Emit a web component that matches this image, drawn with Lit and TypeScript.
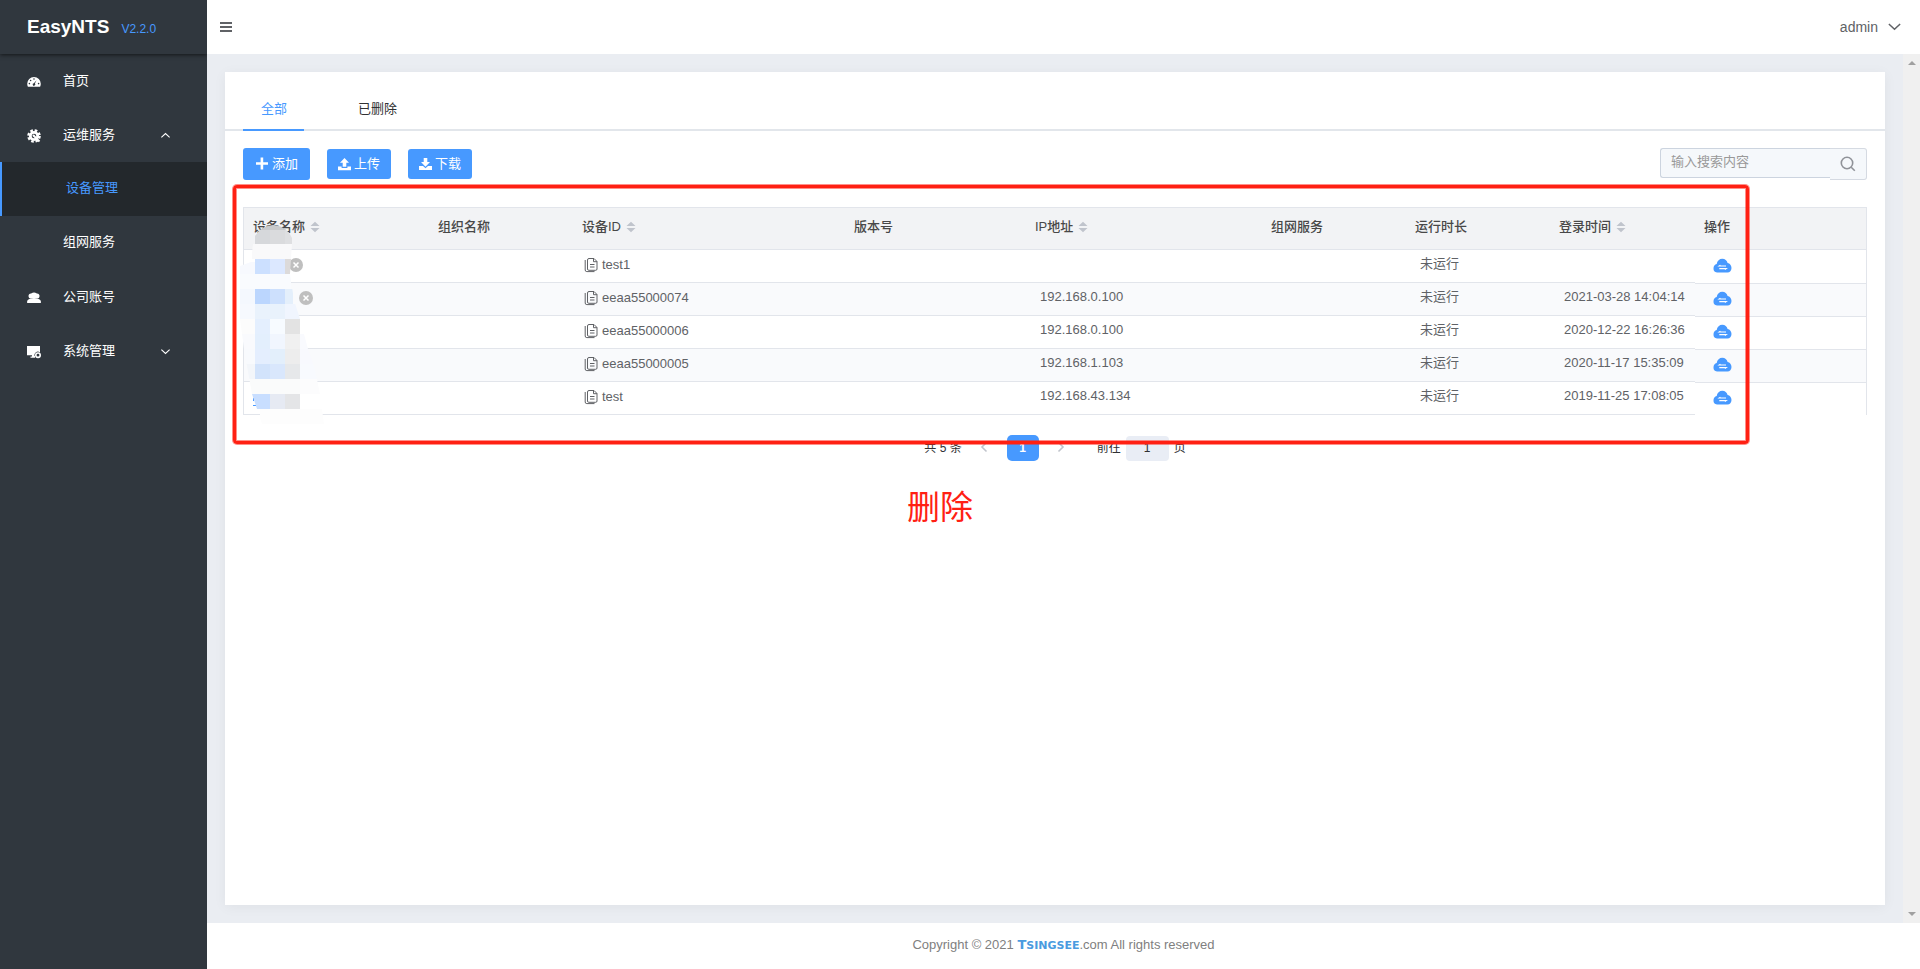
import { LitElement, html, css, svg, nothing } from "lit";
import { customElement, state } from "lit/decorators.js";

interface Device {
  id: string;
  ip: string;
  time: string;
  offlineMark: "near" | "far" | "";
}

const DEVICES: Device[] = [
  { id: "test1", ip: "", time: "", offlineMark: "near" },
  { id: "eeaa55000074", ip: "192.168.0.100", time: "2021-03-28 14:04:14", offlineMark: "far" },
  { id: "eeaa55000006", ip: "192.168.0.100", time: "2020-12-22 16:26:36", offlineMark: "" },
  { id: "eeaa55000005", ip: "192.168.1.103", time: "2020-11-17 15:35:09", offlineMark: "" },
  { id: "test", ip: "192.168.43.134", time: "2019-11-25 17:08:05", offlineMark: "" },
];

const COLUMNS = [
  { label: "设备名称", sort: true, width: 185 },
  { label: "组织名称", sort: false, width: 144 },
  { label: "设备ID", sort: true, width: 272 },
  { label: "版本号", sort: false, width: 181 },
  { label: "IP地址", sort: true, width: 236 },
  { label: "组网服务", sort: false, width: 144 },
  { label: "运行时长", sort: false, width: 144 },
  { label: "登录时间", sort: true, width: 145 },
  { label: "操作", sort: false, width: 171 },
];

// Redaction mosaic: x, y, width, height, fill
const MOSAIC: [number, number, number, number, string][] = [
  [15, 19, 15, 15, "#d6d8db"], [30, 19, 15, 15, "#dadbdd"], [45, 19, 15, 15, "#dedfe1"],
  [12, 34, 40, 15, "#f9f9fa"],
  [0, 52, 15, 12, "#f7f9fe"], [15, 49, 15, 15, "#cce0ff"], [30, 49, 15, 15, "#dce8ff"], [45, 49, 6, 15, "#dcdada"],
  [0, 64, 51, 15, "#f9fbfe"],
  [0, 79, 15, 15, "#f4f8fe"], [15, 79, 15, 15, "#bbd6fe"], [30, 79, 15, 15, "#cde0fd"], [45, 79, 8, 15, "#e4effb"],
  [0, 94, 15, 15, "#f6f9fe"], [15, 94, 30, 15, "#e9f2fc"], [45, 94, 15, 15, "#f0f5fe"],
  [0, 109, 15, 15, "#fcfcfc"], [15, 109, 15, 15, "#e4effe"], [30, 109, 15, 15, "#f7fbff"], [45, 109, 15, 15, "#e3e3e3"],
  [0, 124, 15, 15, "#f9fafd"], [15, 124, 15, 15, "#e3effd"], [30, 124, 15, 15, "#f1f6fe"], [45, 124, 15, 15, "#f0f0f0"], [60, 124, 8, 15, "#f9fafe"],
  [0, 139, 15, 15, "#f8fafd"], [15, 139, 15, 15, "#e4eefe"], [30, 139, 15, 15, "#e3effb"], [45, 139, 15, 15, "#ededed"], [60, 139, 15, 15, "#f8f9fe"],
  [0, 154, 15, 15, "#f3f6fa"], [15, 154, 15, 15, "#d2e3fb"], [30, 154, 15, 15, "#d9e7fc"], [45, 154, 15, 15, "#e6e8ea"], [60, 154, 20, 15, "#f8fafe"],
  [0, 169, 60, 15, "#fafbfb"], [60, 169, 20, 15, "#fcfcfd"],
  [10, 184, 20, 15, "#c8deff"], [30, 184, 15, 15, "#e6eaf3"], [45, 184, 15, 15, "#e4e5e7"],
  [20, 199, 64, 15, "#fdfdfd"],
];

const chevron = (dir: "up" | "down", size: number) => html`
  <svg width=${size} height=${size} viewBox="0 0 12 12" fill="none" stroke="currentColor" stroke-width="1.2">
    <path d=${dir === "up" ? "M1.5 8 6 3.8 10.5 8" : "M1.5 4 6 8.2 10.5 4"} />
  </svg>
`;

const ICONS = {
  gauge: svg`<path fill="currentColor" fill-rule="evenodd" d="M7 2a6.8 6.8 0 0 0-6.8 6.8c0 1.1.2 2 .7 2.9h12.2c.5-.9.7-1.8.7-2.9A6.8 6.8 0 0 0 7 2zM7 3.200a.8.8 0 1 1 0 1.600.8.8 0 0 1 0-1.600zM3.600 4.700a.8.8 0 1 1 0 1.600.8.8 0 0 1 0-1.600zM2.400 7.800a.8.8 0 1 1 0 1.600.8.8 0 0 1 0-1.600zM11.600 7.800a.8.8 0 1 1 0 1.600.8.8 0 0 1 0-1.600zM9.500 5.200 7.900 8.600a1.300 1.300 0 1 1-1-.4z"/>`,
  gear: svg`<g fill="none" stroke="currentColor"><circle cx="7" cy="7" r="5.600" stroke-width="2.400" stroke-dasharray="2.600 1.800"/><circle cx="7" cy="7" r="3.700" stroke-width="2.800"/><path d="m6.500 6.500 6 6" stroke-width="2"/></g><circle cx="6.500" cy="6.500" r="1" fill="currentColor"/>`,
  users: svg`<g fill="currentColor"><circle cx="4" cy="5" r="2.500"/><circle cx="10" cy="5" r="2.500"/><circle cx="7" cy="4.800" r="3.200"/><path d="M0 11.200c0-2.200 1.500-3.300 4-3.700h6c2.500.4 4 1.500 4 3.700 0 .6-.4.800-1 .8H1c-.6 0-1-.2-1-.8z"/></g>`,
  monitor: svg`<path fill="currentColor" d="M0 1h13v6.500A3.400 3.400 0 0 0 7.500 11H8v1.800H3.500V11.500H5V10.200H0z"/><circle cx="11" cy="10.200" r="2.200" fill="none" stroke="currentColor" stroke-width="1.600"/>`,
};

const icon = (name: keyof typeof ICONS) =>
  html`<svg class="menu-icon" width="14" height="14" viewBox="0 0 14 14">${ICONS[name]}</svg>`;

@customElement("app-sidebar")
export class AppSidebar extends LitElement {
  static styles = css`
    :host { display: flex; flex-direction: column; width: 207px; flex: none; background: #30373e; color: #fff; overflow: hidden; }
    .brand {
      height: 54px; flex: none; box-sizing: border-box; padding: 0 27px; display: flex; align-items: baseline; gap: 12px;
      line-height: 54px; box-shadow: 0 1px 4px rgba(0, 0, 0, 0.6);
    }
    .name { font-size: 19px; font-weight: 700; }
    .version { font-size: 12px; color: #4799ff; }
    ul { list-style: none; margin: 0; padding: 0; }
    a {
      display: flex; align-items: center; height: 54px; box-sizing: border-box; padding: 0 36px 0 27px;
      color: inherit; text-decoration: none; font-size: 13px;
    }
    .menu-icon { margin-right: 22px; flex: none; padding-top: 2px; }
    .text { flex: 1; padding-bottom: 4px; }
    .sub { padding-left: 63px; padding-bottom: 5px; }
    .active { background: #23282c; border-left: 2px solid #4799ff; color: #4799ff; padding-left: 64px; }
  `;

  render() {
    return html`
      <div class="brand"><span class="name">EasyNTS</span><span class="version">V2.2.0</span></div>
      <nav>
        <ul>
          <li><a href="#home">${icon("gauge")}<span class="text">首页</span></a></li>
          <li>
            <a href="#ops">${icon("gear")}<span class="text">运维服务</span>${chevron("up", 11)}</a>
            <ul>
              <li><a class="sub active" href="#devices" aria-current="page">设备管理</a></li>
              <li><a class="sub" href="#network">组网服务</a></li>
            </ul>
          </li>
          <li><a href="#accounts">${icon("users")}<span class="text">公司账号</span></a></li>
          <li><a href="#system">${icon("monitor")}<span class="text">系统管理</span>${chevron("down", 11)}</a></li>
        </ul>
      </nav>
    `;
  }
}

@customElement("device-table")
export class DeviceTable extends LitElement {
  static styles = css`
    :host { display: block; position: relative; }
    table {
      width: 100%; table-layout: fixed; border-collapse: separate; border-spacing: 0; font-size: 13px; color: #606266;
      border: 1px solid #e2e5eb; border-bottom: 0;
    }
    th, td { padding: 0 9px; text-align: left; box-sizing: border-box; border-bottom: 1px solid #e2e5eb; white-space: nowrap; }
    th { height: 42px; padding-bottom: 6px; background: #f2f3f5; color: #484848; font-weight: 500; }
    td { height: 33px; line-height: 20px; }
    tr:nth-child(even) td { background: #f9fafc; }
    .indent { padding-left: 14px; padding-bottom: 4px; }
    .op, tr:nth-child(even) .op { padding-left: 18px; padding-bottom: 3px; border-bottom: 0; }
    tr + tr .op { border-top: 1px solid #e2e5eb; }
    .sort { margin-left: 5px; vertical-align: -2px; }
    .id { display: flex; align-items: center; gap: 4px; padding-left: 2px; padding-bottom: 2px; }
    .mark { display: block; margin-left: 36px; margin-bottom: 2px; }
    .far { margin-left: 46px; }
    .action { border: 0; background: none; padding: 0; display: block; color: #4799ff; }
    .action svg { display: block; }
    .mosaic { position: absolute; left: -3px; top: 3px; pointer-events: none; }
  `;

  render() {
    return html`
      <table>
        <colgroup>
          ${COLUMNS.map((c) => html`<col style="width:${(c.width / 1622) * 100}%" />`)}
        </colgroup>
        <thead>
          <tr>
            ${COLUMNS.map(
              (c) => html`<th scope="col">${c.label}${c.sort
                ? html`<svg class="sort" width="10" height="12" viewBox="0 0 10 12" fill="#c0c4cc"><path d="M.5 5 5 .8 9.500 5zM.5 7h9L5 11.200z" /></svg>`
                : nothing}</th>`
            )}
          </tr>
        </thead>
        <tbody>
          ${DEVICES.map(
            (d) => html`
              <tr>
                <td>
                  ${d.offlineMark
                    ? html`<svg class="mark ${d.offlineMark}" width="14" height="14" viewBox="0 0 14 14">
                        <circle cx="7" cy="7" r="7" fill="#bfbfbf" />
                        <path d="m4.500 4.500 5 5m0-5-5 5" stroke="#fff" stroke-width="1.500" />
                      </svg>`
                    : nothing}
                </td>
                <td></td>
                <td>
                  <div class="id">
                    <svg width="14" height="16" viewBox="0 0 14 16" fill="none" stroke="#606266">
                      <path d="M5 1.500h5l3 3v7.500a1.300 1.300 0 0 1-1.300 1.300H4.800A1.300 1.300 0 0 1 3.500 12V3A1.500 1.500 0 0 1 5 1.500z" />
                      <path d="M9.500 1.500v3.200H13M6 7.500h4.500M6 10h4.500M1.200 3v10a1.600 1.600 0 0 0 1.600 1.600h7.700" />
                    </svg>
                    <span>${d.id}</span>
                  </div>
                </td>
                <td></td>
                <td class="indent">${d.ip}</td>
                <td></td>
                <td class="indent">未运行</td>
                <td class="indent">${d.time}</td>
                <td class="op">
                  <button class="action" aria-label="连接">
                    <svg width="19" height="15" viewBox="0 0 19 15">
                      <path fill="currentColor" d="M4 14.500A4 4 0 0 1 .5 10.300c0-2.200 1.300-3.800 3.200-4.300C4.200 2.700 6.500.7 9.300.7c2.700 0 4.700 1.600 5.300 4.300 2.300.4 3.900 2.400 3.900 4.900 0 2.600-1.700 4.600-4 4.600z" />
                      <path d="M13 8H6.300l1.200-.8M6.300 10.700H13l-1.200.8" fill="none" stroke="#fff" stroke-width="1.200" />
                    </svg>
                  </button>
                </td>
              </tr>
            `
          )}
        </tbody>
      </table>
      <svg class="mosaic" width="86" height="216" viewBox="0 0 86 216" aria-hidden="true" shape-rendering="crispEdges">
        <defs>
          <clipPath id="stroke">
            <path d="M15 26Q22 15 34 15 48 17 52 28V34L50 64 54 90 60 109 68 139 75 160 80 184 84 214H22L12 184 4 139 0 109V56L11 52 13 34z" />
          </clipPath>
        </defs>
        <path d="M13 188v3M13 195.500h7" stroke="#4799ff" />
        <g clip-path="url(#stroke)">
          ${MOSAIC.map(([x, y, w, h, fill]) => svg`<rect x=${x} y=${y} width=${w} height=${h} fill=${fill} />`)}
          <rect x="14" y="15" width="38" height="5" fill="#c8cacc" />
        </g>
      </svg>
    `;
  }
}

@customElement("app-root")
export class AppRoot extends LitElement {
  @state() private tab = "all";

  static styles = css`
    :host {
      display: flex; min-height: 100vh; font-family: "Liberation Sans", "Noto Sans CJK SC", sans-serif; font-size: 13px; color: #303133;
    }
    button, input { font: inherit; }
    .page { flex: 1; min-width: 0; display: flex; flex-direction: column; }
    header { height: 54px; flex: none; box-sizing: border-box; padding: 0 18px 1px 13px; display: flex; align-items: center; justify-content: space-between; background: #fff; }
    .plain { border: 0; background: none; padding: 0; display: flex; align-items: center; color: #606266; }
    .user { gap: 9px; font-size: 14px; }
    .body { flex: 1; display: flex; background: #eaedf2; }
    main { flex: 1; min-width: 0; padding: 18px; display: flex; }
    .rail { width: 17px; flex: none; background: #f0f0f0; display: flex; flex-direction: column; justify-content: space-between; align-items: center; padding: 6px 0; box-sizing: border-box; }
    .card { flex: 1; min-width: 0; background: #fff; box-shadow: 0 2px 12px rgba(0, 0, 0, 0.05); position: relative; }
    .tabs { display: flex; gap: 36px; padding: 18px 18px 0; border-bottom: 2px solid #e2e6eb; }
    .tab { border: 0; background: none; height: 41px; padding: 0 17px 4px 18px; margin-bottom: -2px; border-bottom: 2px solid transparent; color: #303133; }
    .selected { color: #4799ff; border-bottom-color: #4799ff; }
    .content { padding: 17px 18px; }
    .toolbar { display: flex; align-items: center; gap: 17px; }
    .btn { height: 30px; border: 0; border-radius: 3px; background: #4799ff; color: #fff; padding: 0 11px; display: flex; align-items: center; gap: 3px; }
    .btn span { padding-bottom: 3px; }
    .add { height: 32px; padding: 0 12px; }
    .search { margin-left: auto; width: 207px; height: 32px; display: flex; align-items: flex-start; }
    .search input {
      flex: 1; min-width: 0; height: 30px; box-sizing: border-box; padding: 0 10px 4px; border: 1px solid #ccd4df; border-right: 0;
      border-radius: 3px 0 0 3px; background: #f5f8fb; color: #606266; outline: none;
    }
    .search input::placeholder { color: #999; opacity: 1; }
    .search button {
      width: 37px; height: 32px; box-sizing: border-box; border: 1px solid #d5dae2; border-left: 0; border-radius: 0 3px 3px 0;
      background: #f5f8fb; padding: 0 1px 0 0; display: grid; place-items: center;
    }
    device-table { margin-top: 27px; }
    .pager { display: flex; justify-content: center; align-items: center; margin-top: 20px; height: 26px; font-size: 12px; }
    .pager span { padding-bottom: 3px; }
    .step { border: 0; background: none; padding: 0 0 2px; width: 45px; height: 26px; display: grid; place-items: center; color: #c0c4cc; }
    .page-no { width: 32px; height: 26px; border: 0; border-radius: 5px; background: #4799ff; color: #fff; font-weight: 700; padding: 0 0 1px; }
    .jump { display: flex; align-items: center; gap: 5px; margin-left: 13px; }
    .jump input { width: 43px; height: 25px; box-sizing: border-box; border: 0; border-radius: 4px; background: #e9edf5; text-align: center; padding: 0 0 1px; color: #303133; }
    .frame {
      position: absolute; left: 8px; right: 136px; top: 113px; height: 253px; border: 3px solid #ff2013; border-radius: 4px;
      box-shadow: 0 0 0 1px rgba(255, 32, 19, 0.5), inset 0 0 0 1px rgba(255, 32, 19, 0.5); pointer-events: none;
    }
    .note { position: absolute; left: 682px; top: 412px; font-size: 33px; line-height: 48px; color: #ff2013; }
    footer { height: 46px; flex: none; display: flex; align-items: center; justify-content: center; background: #fff; color: #808080; padding-bottom: 4px; box-sizing: border-box; }
    .logo { color: #4a9be0; font-family: "DejaVu Sans", sans-serif; font-weight: 700; font-size: 13px; line-height: 1; }
    .logo small { font-size: 11px; }
  `;

  render() {
    const tabs = [["all", "全部"], ["deleted", "已删除"]];
    return html`
      <app-sidebar></app-sidebar>
      <div class="page">
        <header>
          <button class="plain" aria-label="折叠菜单">
            <svg width="12" height="10" viewBox="0 0 12 10" fill="#606266"><path d="M0 0h12v2H0zM0 4h12v2H0zM0 8h12v2H0z" /></svg>
          </button>
          <button class="plain user">admin ${chevron("down", 15)}</button>
        </header>
        <div class="body">
          <main>
            <section class="card">
              <div class="tabs" role="tablist">
                ${tabs.map(
                  ([key, label]) => html`<button
                    role="tab"
                    aria-selected=${this.tab === key}
                    class="tab ${this.tab === key ? "selected" : ""}"
                    @click=${() => (this.tab = key)}
                  >${label}</button>`
                )}
              </div>
              <div class="content">
                <div class="toolbar">
                  <button class="btn add">
                    <svg width="14" height="14" viewBox="0 0 14 14" fill="#fff"><path d="M5.600 .5h2.600v4.700H13v2.600H8.200v4.700H5.600V7.800H1V5.200h4.600z" /></svg><span>添加</span>
                  </button>
                  <button class="btn">
                    <svg width="13" height="13" viewBox="0 0 13 13" fill="#fff"><path d="M6.500 0 11 4.700H8.300v4H4.700v-4H2zM0 8.500h3.600v1.400h5.800V8.500H13v3.800H0z" /></svg><span>上传</span>
                  </button>
                  <button class="btn">
                    <svg width="13" height="13" viewBox="0 0 13 13" fill="#fff"><path d="M4.700 0h3.600v4H11L6.500 8.700 2 4h2.700zM0 8h4l2.500 2.300L9 8h4v4H0z" /></svg><span>下载</span>
                  </button>
                  <form class="search" role="search" @submit=${(e: Event) => e.preventDefault()}>
                    <input type="text" placeholder="输入搜索内容" aria-label="输入搜索内容" />
                    <button aria-label="搜索">
                      <svg width="16" height="16" viewBox="0 0 16 16" fill="none" stroke="#909399" stroke-width="1.600"><circle cx="7" cy="7" r="5.700" /><path d="m11.200 11.200 3.600 3.600" /></svg>
                    </button>
                  </form>
                </div>
                <device-table></device-table>
                <nav class="pager" aria-label="分页">
                  <span>共 5 条</span>
                  <button class="step" aria-label="上一页">
                    <svg width="8" height="12" viewBox="0 0 8 12" fill="none" stroke="currentColor" stroke-width="1.600"><path d="M6.500 1.500 2 6l4.500 4.500" /></svg>
                  </button>
                  <button class="page-no">1</button>
                  <button class="step" aria-label="下一页">
                    <svg width="8" height="12" viewBox="0 0 8 12" fill="none" stroke="currentColor" stroke-width="1.600"><path d="M1.500 1.500 6 6l-4.500 4.500" /></svg>
                  </button>
                  <label class="jump"><span>前往</span><input type="text" value="1" /><span>页</span></label>
                </nav>
              </div>
              <div class="frame"></div>
              <div class="note">删除</div>
            </section>
          </main>
          <div class="rail" aria-hidden="true">
            <svg width="8" height="5" viewBox="0 0 8 5" fill="#a0a0a0"><path d="M0 5 4 1l4 4z" /></svg>
            <svg width="8" height="5" viewBox="0 0 8 5" fill="#a0a0a0"><path d="m0 0 4 4 4-4z" /></svg>
          </div>
        </div>
        <footer><span>Copyright © 2021 <b class="logo">T<small>SINGSEE</small></b>.com All rights reserved</span></footer>
      </div>
    `;
  }
}
